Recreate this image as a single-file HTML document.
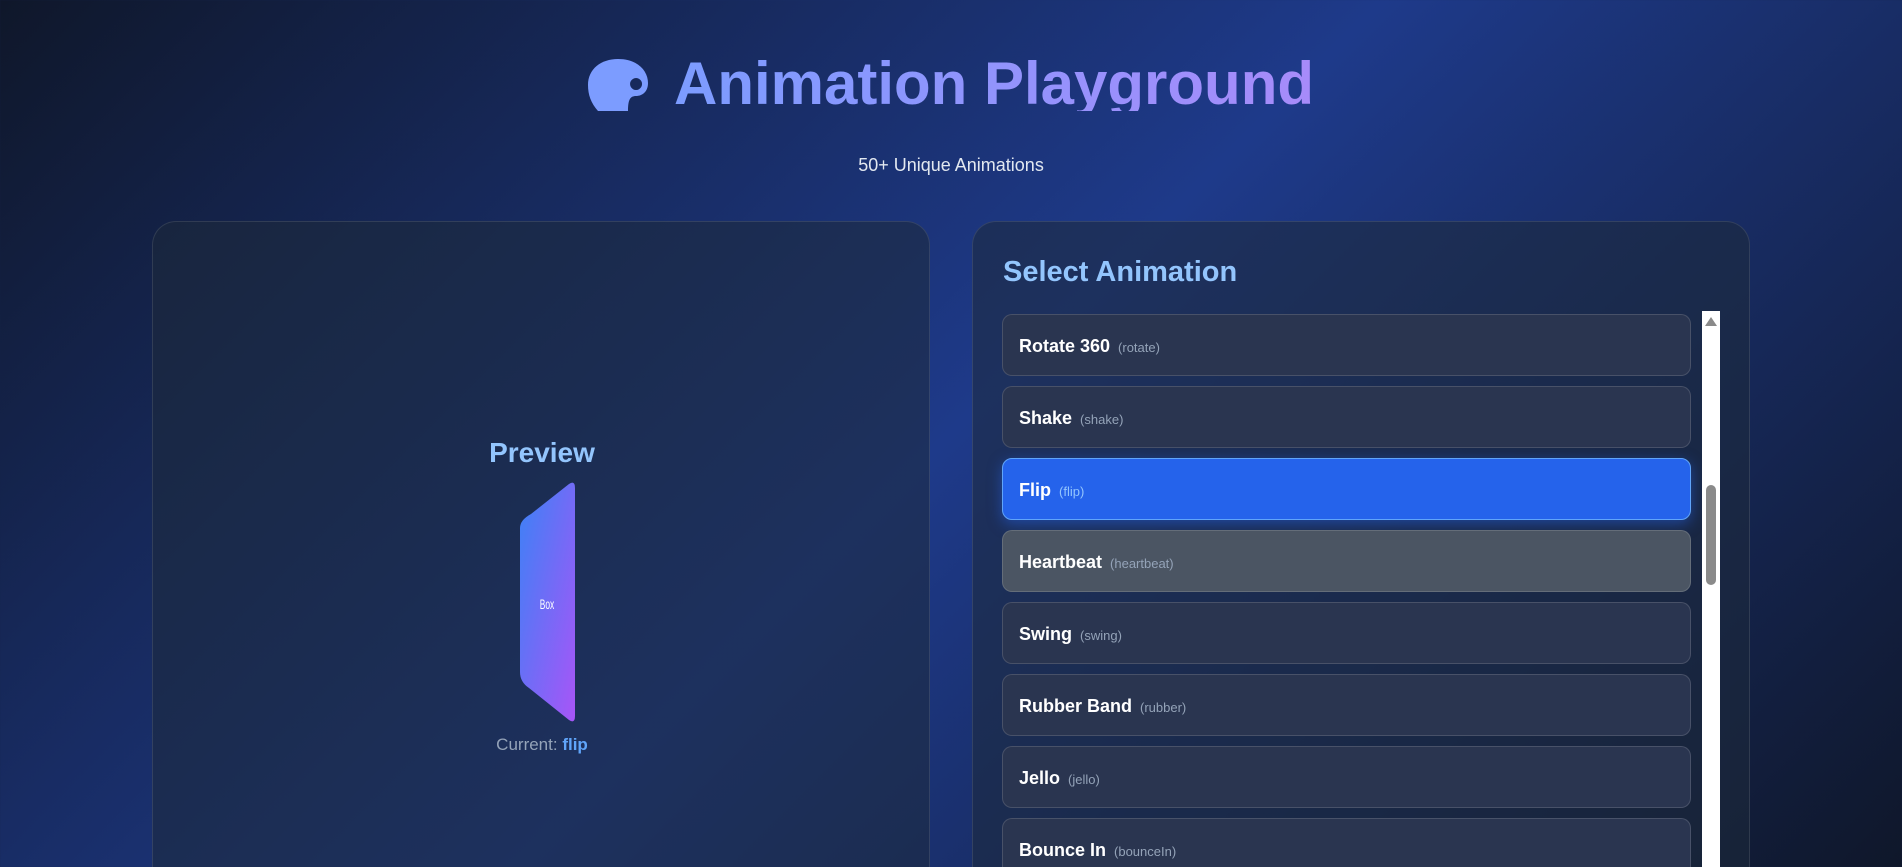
<!DOCTYPE html>
<html><head><meta charset="utf-8"><style>
*{box-sizing:border-box;margin:0;padding:0}
html,body{width:1902px;height:867px;overflow:hidden}
body{font-family:"Liberation Sans",sans-serif;background:linear-gradient(135deg,#0f172a 0%,#1e3a8a 50%,#0f172a 100%);position:relative;color:#fff}
.title{position:absolute;left:0;right:0;top:49px;text-align:center;height:62px;overflow:hidden;white-space:nowrap}
.title span{font-size:60px;font-weight:bold;line-height:70px;background:linear-gradient(90deg,#7c9cff,#a78bfa);-webkit-background-clip:text;background-clip:text;color:transparent;display:inline-block;vertical-align:top}
.title svg{vertical-align:top;margin-top:10px;margin-right:26px}
.sub{position:absolute;left:0;right:0;top:155px;text-align:center;font-size:18px;color:#e2e8f0}
.card{position:absolute;top:221px;height:646px;border-radius:24px 24px 0 0;background:rgba(30,41,59,0.55);border:1px solid rgba(255,255,255,0.1);border-bottom:none}
.left{left:152px;width:778px}
.right{left:972px;width:778px}
.pv{position:absolute;left:0;width:778px;top:215px;text-align:center;font-size:28px;font-weight:bold;color:#93c5fd}
.cur{position:absolute;left:0;width:778px;top:513px;text-align:center;font-size:17px;color:#94a3b8}
.cur b{color:#60a5fa}
.sel{position:absolute;left:30px;top:34px;font-size:29px;font-weight:bold;color:#93c5fd}
.item{position:absolute;left:1002px;width:689px;height:62px;border-radius:10px;background:#2a3550;border:1px solid rgba(255,255,255,0.14);padding-left:16px;line-height:62px;font-size:18px;font-weight:bold;color:#fff}
.item small{font-size:13px;font-weight:normal;color:#94a3b8;margin-left:8px}
.item.act{background:#2563eb;border-color:#60a5fa;box-shadow:0 4px 14px rgba(37,99,235,0.5)}
.item.act small{color:#93c5fd}
.item.hov{background:#4b5563}
.sb{position:absolute;left:1702px;top:311px;width:18px;height:556px;background:#fff}
.th{position:absolute;left:4px;top:174px;width:10px;height:100px;border-radius:5px;background:#8a8a8a}
</style></head><body>
<div class="title"><svg width="60" height="52" viewBox="0 0 60 52"><path d="M30 0C50 0 60 12 60 24C60 33 54 37 48 37C42 37 40 41 40 52L10 52C3 44 0 36 0 26C0 10 13 0 30 0Z M48 19a6 6 0 1 0 0.1 0Z" fill="#7c9cff" fill-rule="evenodd"/></svg><span>Animation Playground</span></div>
<div class="sub">50+ Unique Animations</div>
<div class="card left">
<div class="pv">Preview</div>
<svg style="position:absolute;left:360px;top:258px" width="70" height="245" viewBox="0 0 70 245">
<defs><linearGradient id="g" x1="0" y1="0" x2="1" y2="1"><stop offset="0" stop-color="#3b82f6"/><stop offset="1" stop-color="#a855f7"/></linearGradient></defs>
<path d="M18 34 L56 4 Q62 0 62 8 L62 236 Q62 244 56 240 L16 208 Q7 202 7 192 L7 48 Q7 40 18 34Z" fill="url(#g)"/>
<text x="34" y="129" font-size="14" fill="#fff" text-anchor="middle" font-family="Liberation Sans" transform="scale(0.6,1)" style="transform-origin:34px 124px">Box</text>
</svg>
<div class="cur">Current: <b>flip</b></div>
</div>
<div class="card right"><div class="sel">Select Animation</div></div>
<div class="item" style="top:314px">Rotate 360<small>(rotate)</small></div>
<div class="item" style="top:386px">Shake<small>(shake)</small></div>
<div class="item act" style="top:458px">Flip<small>(flip)</small></div>
<div class="item hov" style="top:530px">Heartbeat<small>(heartbeat)</small></div>
<div class="item" style="top:602px">Swing<small>(swing)</small></div>
<div class="item" style="top:674px">Rubber Band<small>(rubber)</small></div>
<div class="item" style="top:746px">Jello<small>(jello)</small></div>
<div class="item" style="top:818px;height:49px;border-bottom:none;border-radius:10px 10px 0 0">Bounce In<small>(bounceIn)</small></div>
<div class="sb"><div style="position:absolute;left:3px;top:6px;width:0;height:0;border-left:6px solid transparent;border-right:6px solid transparent;border-bottom:9px solid #8a8a8a"></div><div class="th"></div></div>
</body></html>
